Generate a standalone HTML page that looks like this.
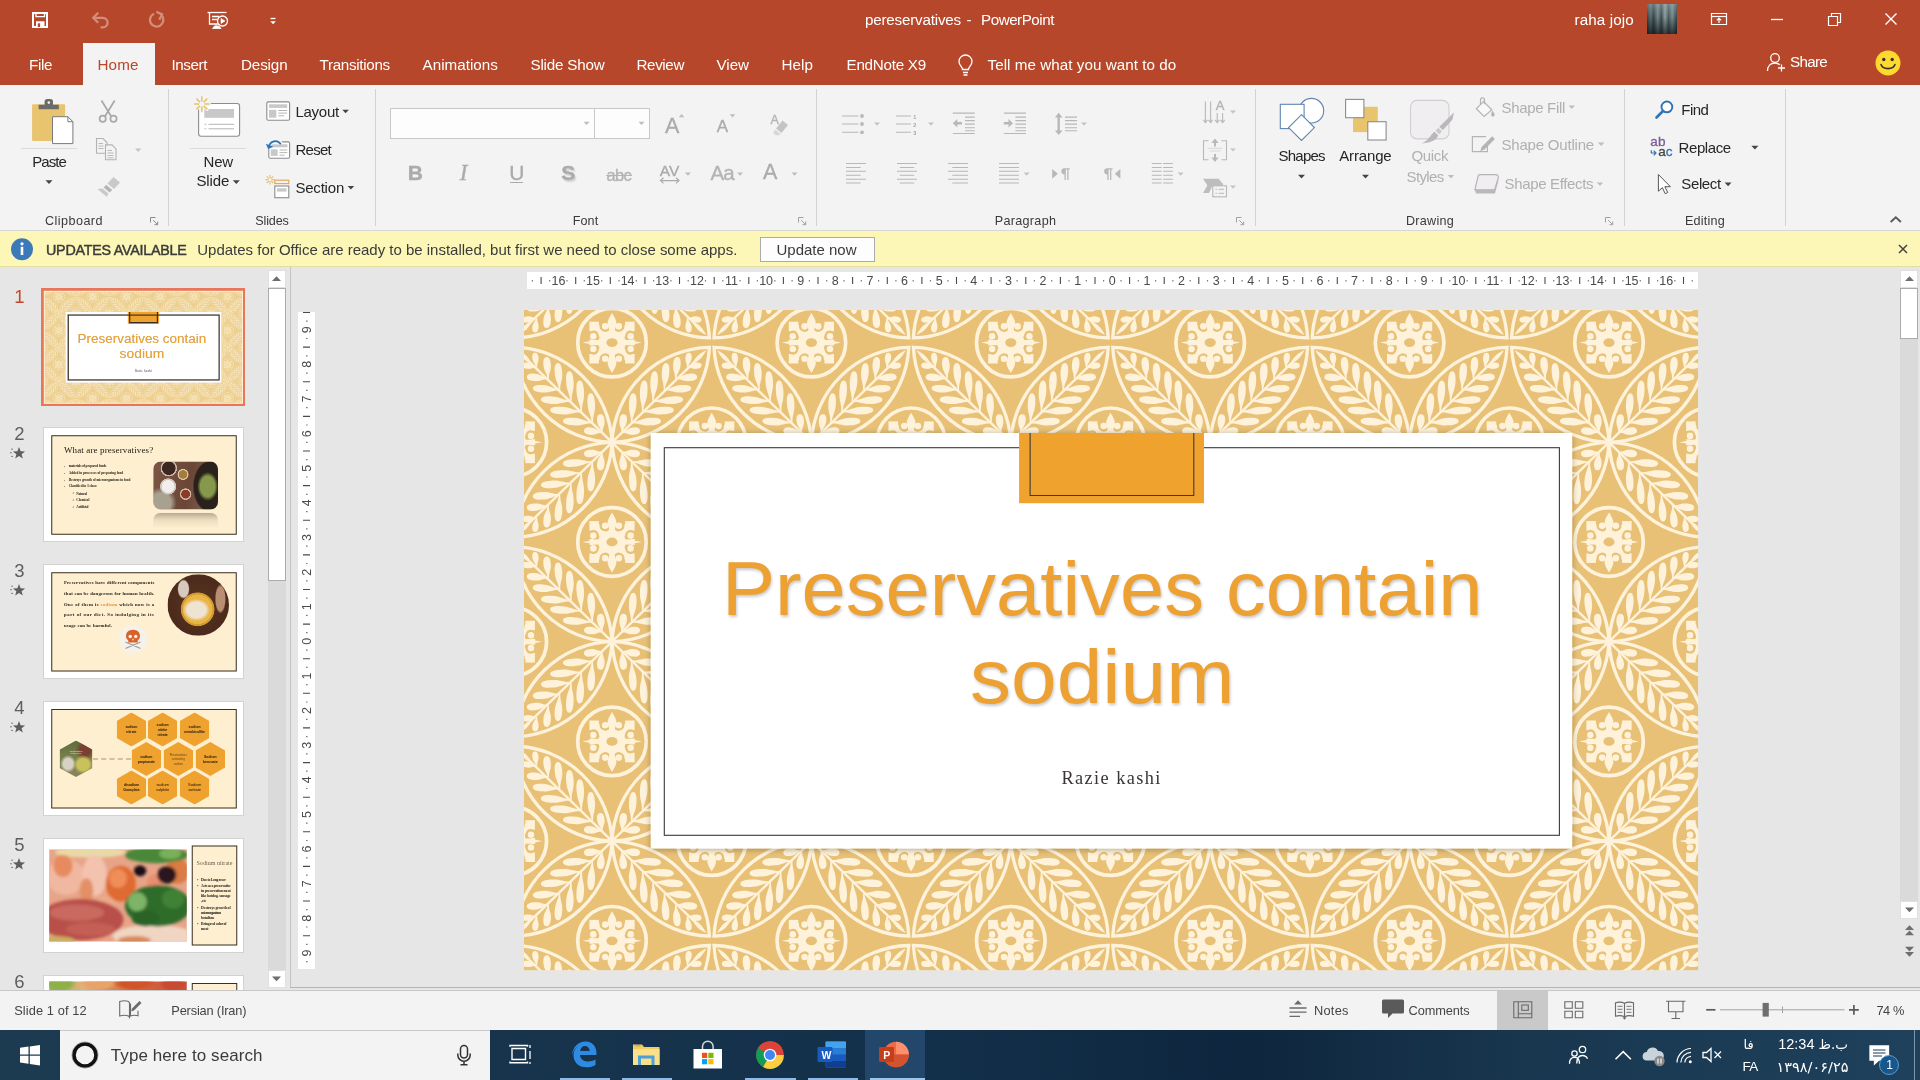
<!DOCTYPE html>
<html lang="en">
<head>
<meta charset="utf-8">
<title>pereservatives - PowerPoint</title>
<style>
*{box-sizing:border-box;margin:0;padding:0}
html,body{width:1920px;height:1080px;overflow:hidden;background:#E6E6E6}
body{font-family:"Liberation Sans",sans-serif;font-size:15px;color:#262626;position:relative}
.abs{position:absolute}
.t{position:absolute;white-space:nowrap;line-height:1}
svg{position:absolute;overflow:visible}
#titlebar{position:absolute;left:0;top:0;width:1920px;height:85px;background:#B7472A}
#ribbon{position:absolute;left:0;top:85px;width:1920px;height:146px;background:#F3F3F3;border-bottom:1px solid #D8D8D2}
#upd{position:absolute;left:0;top:231px;width:1920px;height:36px;background:#FCF7B6;border-bottom:1px solid #E4DFA0}
#work{position:absolute;left:0;top:267px;width:1920px;height:723px;background:#E6E6E6;overflow:hidden}
#status{position:absolute;left:0;top:990px;width:1920px;height:40px;background:#F3F3F3;border-top:1px solid #C8C8C8}
#taskbar{position:absolute;left:0;top:1030px;width:1920px;height:50px;background:linear-gradient(90deg,#1C3B51 0,#18344D 26%,#13304A 48%,#0E263E 65%,#19374F 80%,#1F415C 100%)}
.tab{position:absolute;top:56px;color:#fff;font-size:15.5px;line-height:18px;white-space:nowrap}
.gl{position:absolute;top:214px;font-size:13px;line-height:14px;color:#3A3A3A;white-space:nowrap;transform:translateX(-50%)}
.sep{position:absolute;top:89px;width:1px;height:137px;background:#D2D2D2}
.rl{position:absolute;font-size:15px;line-height:18px;color:#262626;white-space:nowrap}
.rd{color:#B4B4B4;-webkit-text-stroke:.35px currentColor}
</style>
</head>
<body>
<div id="root" style="position:absolute;left:0;top:0;width:1920px;height:1080px;will-change:transform">
<div id="titlebar"></div>
<div id="ribbon"></div>
<div id="upd"></div>
<div id="work"></div>
<div id="status"></div>
<div id="taskbar"></div>
<!-- title bar + tabs -->
<div id="tb2" class="abs" style="left:0;top:0;width:1920px;height:85px">
<svg style="left:0;top:0" width="300" height="42" fill="none" stroke="#fff" stroke-width="1.4">
 <!-- save -->
 <path d="M33,13h14v14h-14z" stroke-width="2"/><path d="M36,21.300h8.500v5.700h-8.500z" fill="#fff" stroke="none"/><path d="M37.800,23.300h2.300v3.700h-2.300z" fill="#B7472A" stroke="none"/><path d="M36,13.500v3.200h8.500v-3.200" stroke-width="1.300"/>
 <!-- undo (dim) -->
 <g stroke="#D28E7C" stroke-width="2.300"><path d="M94,17.800h8.800a4.800,4.800 0 0 1 0,9.600h-2.300"/><path d="M98.200,12.800l-5,5l5,5"/></g>
 <!-- redo (dim) -->
 <g stroke="#D28E7C" stroke-width="2.300"><path d="M161.300,15a6.700,6.700 0 1 1 -7.300,-1.300"/><path d="M156.300,11.700l5.700,2.700l-2.700,5.400"/></g>
 <!-- start from beginning -->
 <g stroke-width="1.3"><path d="M207.5,12.5h19"/><path d="M209.5,12.5v11.5h9"/><path d="M212,16.5h7M212,19.5h5"/><circle cx="222.5" cy="21" r="5" fill="#B7472A"/><path d="M221,18.5l4,2.5l-4,2.5z" fill="#fff" stroke-width="0.6"/><path d="M216,24v3M212.5,28.5h8.5l-2,-2.5h-4.5z" fill="#fff" stroke-width="0.8"/></g>
 <!-- customize -->
 <path d="M270.5,18.5h5" stroke-width="1.3"/><path d="M270.3,21.3h5.6l-2.8,3z" fill="#fff" stroke="none"/>
</svg>
<div class="t" style="font-size:15.2px;letter-spacing:-0.20px;left:865px;top:10.5px;color:#fff;line-height:18px">pereservatives</div><div class="t" style="font-size:15.2px;letter-spacing:-0.56px;left:966.5px;top:10.5px;color:#fff;line-height:18px">-</div><div class="t" style="font-size:15.2px;letter-spacing:-0.47px;left:981px;top:10.5px;color:#fff;line-height:18px">PowerPoint</div>
<div class="t" style="font-size:15.2px;letter-spacing:0.13px;left:1574.5px;top:10.5px;color:#fff;line-height:18px">raha jojo</div>
<!-- avatar -->
<div class="abs" style="left:1647px;top:4px;width:30px;height:30px;background:linear-gradient(180deg,rgba(160,180,182,.55) 0,rgba(120,140,142,.25) 45%,rgba(20,26,28,.75) 100%),linear-gradient(90deg,#1F2729 0,#4F6063 12%,#222B2D 22%,#6F8588 36%,#2B3537 48%,#8FA3A5 60%,#3A4648 72%,#76898B 84%,#222A2C 100%)"></div>
<svg style="left:1700px;top:0" width="220" height="40" fill="none" stroke="#fff" stroke-width="1.2">
 <path d="M11.5,13.5h15v11h-15z"/><path d="M11.5,16.5h15"/><path d="M19,23v-4.5M16.8,20.3l2.2,-2.2l2.2,2.2"/>
 <path d="M71,19.5h12" stroke-width="1.3"/>
 <path d="M128.5,16.5h9v9h-9z"/><path d="M131.5,16.5v-3h9v9h-3"/>
 <path d="M185.5,13.5l11,11M196.5,13.5l-11,11" stroke-width="1.4"/>
</svg>
<!-- tabs -->
<div class="abs" style="left:83px;top:43px;width:72px;height:42px;background:#F3F3F3"></div>
<div class="tab" style="font-size:15.2px;letter-spacing:-0.37px;left:29px">File</div>
<div class="tab" style="font-size:15.2px;letter-spacing:0.11px;left:97.5px;color:#B7472A">Home</div>
<div class="tab" style="font-size:15.2px;letter-spacing:-0.42px;left:171.5px">Insert</div>
<div class="tab" style="font-size:15.2px;letter-spacing:-0.14px;left:241px">Design</div>
<div class="tab" style="font-size:15.2px;letter-spacing:-0.30px;left:319.5px">Transitions</div>
<div class="tab" style="font-size:15.2px;letter-spacing:0.03px;left:422.5px">Animations</div>
<div class="tab" style="font-size:15.2px;letter-spacing:-0.20px;left:530.5px">Slide Show</div>
<div class="tab" style="font-size:15.2px;letter-spacing:-0.39px;left:636.5px">Review</div>
<div class="tab" style="font-size:15.2px;letter-spacing:-0.04px;left:716.5px">View</div>
<div class="tab" style="font-size:15.2px;letter-spacing:0.06px;left:781.5px">Help</div>
<div class="tab" style="font-size:15.2px;letter-spacing:-0.25px;left:846.5px">EndNote X9</div>
<div class="tab" style="font-size:15.2px;letter-spacing:0.05px;left:987.5px">Tell me what you want to do</div>
<svg style="left:955px;top:52px" width="22" height="26" fill="none" stroke="#fff" stroke-width="1.3"><path d="M7.5,17.5c0,-3 -3.5,-4 -3.5,-8a6.5,6.5 0 0 1 13,0c0,4 -3.500,5 -3.5,8z"/><path d="M8,20.5h5M8.5,23h4"/></svg>
<svg style="left:1764px;top:50px" width="26" height="24" fill="none" stroke="#fff" stroke-width="1.3"><circle cx="11" cy="8" r="4.3"/><path d="M3.500,21c0,-5 3,-8 7.500,-8c2,0 3.500,.6 4.700,1.700"/><path d="M17.500,14.500v7M14,18h7"/></svg>
<div class="tab" style="font-size:15.2px;letter-spacing:-0.71px;left:1790px;top:53px">Share</div>
<svg style="left:1874px;top:49px" width="28" height="28"><circle cx="14" cy="14" r="12.500" fill="#FFD92E"/><circle cx="9.800" cy="10.500" r="1.700" fill="#333"/><circle cx="18.200" cy="10.500" r="1.700" fill="#333"/><path d="M7,15.500c2,5.500 12,5.500 14,0" fill="none" stroke="#333" stroke-width="1.600" stroke-linecap="round"/></svg>
</div>
<!-- ribbon: separators + group labels -->
<div class="sep" style="left:168px"></div><div class="sep" style="left:375px"></div><div class="sep" style="left:816px"></div><div class="sep" style="left:1255px"></div><div class="sep" style="left:1624px"></div><div class="sep" style="left:1785px"></div>
<div class="gl" style="font-size:12.6px;letter-spacing:0.45px;left:74px">Clipboard</div>
<div class="gl" style="font-size:12.6px;letter-spacing:-0.14px;left:272px">Slides</div>
<div class="gl" style="font-size:12.6px;letter-spacing:0.07px;left:585.500px">Font</div>
<div class="gl" style="font-size:12.6px;letter-spacing:0.30px;left:1025.500px">Paragraph</div>
<div class="gl" style="font-size:12.6px;letter-spacing:0.25px;left:1430px">Drawing</div>
<div class="gl" style="font-size:12.6px;letter-spacing:0.21px;left:1705px">Editing</div>
<!-- clipboard + slides text -->
<div class="rl" style="font-size:15px;letter-spacing:-0.97px;left:32.300px;top:152.600px">Paste</div>
<div class="rl" style="font-size:15px;letter-spacing:-0.17px;left:203.500px;top:152.600px">New</div>
<div class="rl" style="font-size:15px;letter-spacing:-0.13px;left:196.400px;top:172.400px">Slide</div>
<div class="rl" style="font-size:15px;letter-spacing:-0.24px;left:295.400px;top:102.500px">Layout</div>
<div class="rl" style="font-size:15px;letter-spacing:-0.72px;left:295.400px;top:140.700px">Reset</div>
<div class="rl" style="font-size:15px;letter-spacing:-0.20px;left:295.400px;top:178.700px">Section</div>
<div class="abs" style="left:21px;top:148px;width:56px;height:1px;background:#DADADA"></div>
<div class="abs" style="left:190px;top:148px;width:56px;height:1px;background:#DADADA"></div>
<svg style="left:0;top:85px" width="380" height="146" viewBox="0 85 380 146">
<!-- paste -->
<rect x="32.100" y="104.200" width="33" height="36.800" rx="1" fill="#E9C46E"/>
<path d="M44.600,104.800v-3.400a2.500,2.500 0 0 1 2.500,-2.500h3.400a2.500,2.500 0 0 1 2.500,2.500v3.400h5.800v4.400h-20.200v-4.400z" fill="#6B6B6B"/>
<circle cx="48.800" cy="102.600" r="1.300" fill="#F3F3F3"/>
<path d="M52.500,116.700h15.400l5,5v21.900h-20.400z" fill="#fff" stroke="#7A7A7A" stroke-width="1"/>
<path d="M67.900,116.700v5h5" fill="none" stroke="#7A7A7A" stroke-width="1"/>
<path d="M45.500,180.200h7l-3.500,3.700z" fill="#444"/>
<!-- cut -->
<g fill="none" stroke="#A8A8A8" stroke-width="1.700"><path d="M101.500,100.500l9.500,15.500M114.700,100.500l-9.500,15.500"/><circle cx="102.700" cy="118.800" r="3.100"/><circle cx="113.500" cy="118.800" r="3.100"/></g>
<!-- copy -->
<g fill="#F3F3F3" stroke="#B2B2B2" stroke-width="1.100"><path d="M96.500,138.500h6.500l4,4v10.800h-10.500z"/><path d="M105.500,144.900h6.500l4,4v10.800h-10.500z"/></g>
<g stroke="#B2B2B2" stroke-width="0.900"><path d="M98.500,143.500h4.500M98.500,146h5M98.500,148.500h5M107.500,150.500h4.500M107.500,153h6M107.500,155.500h6M107.500,157.800h6"/></g>
<path d="M135,148.600h6.400l-3.200,3.400z" fill="#C4C4C4"/>
<!-- format painter -->
<g fill="#C9C9C9"><path d="M113.500,177l6.500,5.500l-6,6.500l-6.500,-5.500z"/><path d="M106.200,184.800l6,5.200l-2.500,2.600l-6,-5.200z" fill="#B5B5B5"/><path d="M102.500,188.600l5.800,5l-1.300,3.300l-9.700,-7.900z"/></g>
<path d="M150.500,217.500h5M150.500,217.500v5" fill="none" stroke="#8A8A8A" stroke-width="1"/><path d="M153.200,220.200l4.500,4.500M157.700,221.500v3.200h-3.200" fill="none" stroke="#8A8A8A" stroke-width="1"/>
<!-- new slide -->
<rect x="198.600" y="103.500" width="41" height="32.700" rx="2.500" fill="#fff" stroke="#8C8C8C" stroke-width="1.100"/>
<rect x="204.300" y="109" width="29.700" height="8.800" fill="#C8C8C8"/>
<path d="M208.500,124.300h25.500M208.500,128.800h25.500" stroke="#B5B5B5" stroke-width="1"/><path d="M204.500,124.300h1.800M204.500,128.800h1.800" stroke="#B5B5B5" stroke-width="1"/>
<g stroke="#F3F3F3" stroke-width="3.400" stroke-linecap="round"><path d="M201.800,96.500v15M194.300,104h15M196.500,98.700l10.600,10.600M207.100,98.700l-10.600,10.600"/></g>
<g stroke="#E9C46E" stroke-width="1.500"><path d="M201.800,96.300v15.400M194.100,104h15.400M196.400,98.600l10.800,10.800M207.200,98.600l-10.800,10.800"/></g>
<circle cx="201.800" cy="104" r="2.600" fill="#F3F3F3"/>
<path d="M232.800,180.200h7l-3.500,3.700z" fill="#444"/>
<!-- layout -->
<rect x="266.800" y="101.900" width="22.800" height="18.300" rx="1.500" fill="#fff" stroke="#8C8C8C" stroke-width="1.100"/>
<rect x="269" y="104.300" width="18.200" height="3.600" fill="#C8C8C8"/><rect x="269" y="109.800" width="7.300" height="7.900" fill="#C8C8C8"/>
<path d="M278.300,110.500h8.800M278.300,113.100h8.800M278.300,115.800h6" stroke="#B5B5B5" stroke-width="1"/>
<path d="M342.300,109.800h6.600l-3.300,3.500z" fill="#444"/>
<!-- reset -->
<rect x="268.800" y="141.900" width="20.800" height="16.300" rx="1.500" fill="#fff" stroke="#8C8C8C" stroke-width="1.100"/>
<rect x="270.800" y="144.300" width="16.600" height="3" fill="#C8C8C8"/><rect x="270.800" y="149.300" width="6.800" height="6.600" fill="#C8C8C8"/>
<path d="M279.500,150h7.800M279.500,152.600h7.800M279.500,155.200h5" stroke="#B5B5B5" stroke-width="1"/>
<path d="M268.500,146.500c1.500,-6.500 9,-8 12.300,-2.800" fill="none" stroke="#F3F3F3" stroke-width="4.500"/>
<path d="M268.800,147.300c1,-6.500 8.500,-8.300 12,-3" fill="none" stroke="#2E75B6" stroke-width="1.800"/><path d="M265.800,143.800l2.400,5.300l5.200,-2.300z" fill="#2E75B6"/>
<!-- section -->
<g stroke="#E9C46E" stroke-width="1.200"><path d="M270,175v9.500M265.300,179.700h9.500M266.700,176.400l6.600,6.600M273.300,176.400l-6.600,6.600"/></g>
<circle cx="270" cy="179.700" r="1.600" fill="#F3F3F3"/>
<rect x="274.800" y="180.200" width="14" height="3.400" fill="#F3F3F3" stroke="#E8A153" stroke-width="1.100"/>
<rect x="274.800" y="186" width="14" height="11.700" fill="#fff" stroke="#8C8C8C" stroke-width="1.100"/><rect x="277" y="188.300" width="9.600" height="3.300" fill="#C8C8C8"/>
<path d="M347.600,185.900h6.600l-3.300,3.500z" fill="#444"/>
</svg>
<!-- ribbon: font group -->
<div class="abs" style="left:390px;top:108px;width:205px;height:31px;background:#FDFDFD;border:1px solid #C8C8C8"></div>
<div class="abs" style="left:594px;top:108px;width:56px;height:31px;background:#FDFDFD;border:1px solid #C8C8C8"></div>
<div class="rl rd" style="font-size:21.5px;letter-spacing:1.66px;left:665px;top:114.500px;line-height:22px;color:#ABABAB">A</div>
<div class="rl rd" style="font-size:17px;letter-spacing:0.86px;left:716.700px;top:118.200px;line-height:18px;color:#ABABAB">A</div>
<div class="rl rd" style="font-size:12.5px;letter-spacing:0.16px;left:770.500px;top:112.700px;line-height:14px;color:#B4B4B4">A</div>
<div class="rl rd" style="font-size:21px;letter-spacing:-1.77px;left:407.800px;top:161.300px;line-height:24px;font-weight:bold;color:#ABABAB">B</div>
<div class="rl rd" style="font-size:23px;letter-spacing:2.84px;left:459.800px;top:159.700px;line-height:26px;font-family:'Liberation Serif',serif;font-style:italic;color:#ABABAB">I</div>
<div class="rl rd" style="font-size:21px;letter-spacing:-1.37px;left:509.300px;top:161.300px;line-height:24px;color:#ABABAB">U</div>
<div class="abs" style="left:509.500px;top:181.800px;width:13.500px;height:1.300px;background:#ABABAB"></div>
<div class="rl rd" style="font-size:21px;letter-spacing:-1.11px;left:561.300px;top:161.300px;line-height:24px;font-weight:bold;color:#ABABAB;text-shadow:1.500px 1.500px 1.500px #CFCFCF">S</div>
<div class="rl rd" style="font-size:16.5px;letter-spacing:-0.63px;left:606.500px;top:165.700px;line-height:18px;color:#B4B4B4">abc</div>
<div class="abs" style="left:606px;top:175px;width:25.500px;height:1.200px;background:#B4B4B4"></div>
<div class="rl rd" style="font-size:15.5px;letter-spacing:0.24px;left:659.700px;top:161.800px;line-height:18px;color:#ABABAB">AV</div>
<div class="rl rd" style="font-size:20.5px;letter-spacing:-1.04px;left:710.600px;top:162.400px;line-height:22px;color:#B4B4B4">Aa</div>
<div class="rl rd" style="font-size:21.5px;letter-spacing:0.86px;left:762.900px;top:161.400px;line-height:23px;color:#ABABAB">A</div>
<svg style="left:375px;top:85px" width="450" height="146" viewBox="375 85 450 146">
<g fill="#BDBDBD"><path d="M583.600,121.800h6l-3,3.200z"/><path d="M638.500,121.800h6l-3,3.200z"/><path d="M678.800,117.200h5.600l-2.800,-3.200z"/><path d="M729.700,114.200h5.600l-2.800,3.200z"/>
<path d="M684.900,172.600h6l-3,3.200z"/><path d="M737.100,172.600h6l-3,3.200z"/><path d="M791.500,172.600h6l-3,3.200z"/></g>
<!-- eraser -->
<path d="M782.500,120.500l5.500,4.500l-6.500,8l-5.500,-4.500z" fill="#C4C4C4"/><path d="M775.200,129.600l5.300,4.300l-1.600,1.300h-3l-2.700,-2.300z" fill="#D6D6D6"/>
<!-- AV arrow -->
<path d="M660.500,180.600h18.500M663.500,177.800l-3,2.800l3,2.800M676,177.800l3,2.800l-3,2.800" fill="none" stroke="#ABABAB" stroke-width="1.200"/>
<path d="M798.500,217.500h5M798.500,217.500v5" fill="none" stroke="#A0A0A0" stroke-width="1"/><path d="M801.200,220.200l4.500,4.500M805.700,221.500v3.200h-3.200" fill="none" stroke="#A0A0A0" stroke-width="1"/>
</svg>
<!-- ribbon: paragraph group -->
<svg style="left:815px;top:85px" width="450" height="146" viewBox="815 85 450 146">
<g fill="none" stroke="#B8B8B8" stroke-width="1.100">
<!-- bullets -->
<path d="M842,116h16.400M842,124h16.400M842,132.300h16.400"/>
<!-- numbering -->
<path d="M895.900,116h15.100M895.900,124h15.100M895.900,132.300h15.100"/>
<!-- decrease indent -->
<path d="M952.800,113.100h22M952.800,133.500h22M965,117.100h9.800M965,120.600h9.800M965,124.100h9.800M965,127.700h9.800M965,130.700h9.800"/>
<!-- increase indent -->
<path d="M1003.900,113.100h22M1003.900,133.500h22M1015.400,117.100h10.600M1015.400,120.600h10.600M1015.400,124.100h10.600M1015.400,127.700h10.600M1015.400,130.700h10.600"/>
<!-- line spacing -->
<path d="M1065,117.100h12M1065,120.600h12M1065,124.100h12M1065,127.700h12M1065,130.700h12"/>
<!-- align left -->
<path d="M846,163.500h20M846,167.500h14.700M846,171.200h20M846,175.200h14.700M846,179.200h20M846,183h14.700"/>
<!-- center -->
<path d="M897,163.500h20M899.800,167.500h14.400M897,171.200h20M899.800,175.200h14.400M897,179.200h20M899.800,183h14.400"/>
<!-- right -->
<path d="M948,163.500h20M952.300,167.500h15.700M948,171.200h20M952.300,175.200h15.700M948,179.200h20M952.300,183h15.700"/>
<!-- justify -->
<path d="M999,163.500h20M999,167.500h20M999,171.200h20M999,175.200h20M999,179.200h20M999,183h20"/>
<!-- columns -->
<path d="M1151.800,163.500h9.800M1151.800,167.500h9.800M1151.800,171.200h9.800M1151.800,175.200h9.800M1151.800,179.200h9.800M1151.800,183h9.800M1163.100,163.500h9.800M1163.100,167.500h9.800M1163.100,171.200h9.800M1163.100,175.200h9.800M1163.100,179.200h9.800M1163.100,183h9.800"/>
</g>
<g fill="#B8B8B8">
<circle cx="862" cy="116" r="1.900"/><circle cx="862" cy="124" r="1.900"/><circle cx="862" cy="132.300" r="1.900"/>
<path d="M952.800,123.200l4.500,-4.300v3h4.700v2.600h-4.700v3z"/>
<path d="M1013,123.200l-4.500,-4.300v3h-4.700v2.600h4.700v3z"/>
<path d="M1058.700,112.800l3.800,4.600h-2.600v13h2.600l-3.800,4.600l-3.800,-4.600h2.600v-13h-2.600z"/>
<!-- LTR / RTL -->
<path d="M1052.200,168.900l5.600,4.900l-5.600,4.900z"/><path d="M1120.400,168.900l-5.600,4.900l5.600,4.900z"/>
<path d="M1064.500,168.200h5.300v1.300h-1.300v10.500h-1.300v-10.500h-1.400v10.500h-1.300v-5.500a3.150,3.150 0 0 1 0,-6.300z"/>
<path d="M1107.300,168.200h5.300v1.300h-1.300v10.500h-1.300v-10.500h-1.400v10.500h-1.300v-5.500a3.150,3.150 0 0 1 0,-6.300z"/>
</g>
<g fill="#C4C4C4"><path d="M874,122.600h6l-3,3.200z"/><path d="M928,122.600h6l-3,3.200z"/><path d="M1081,122.600h6l-3,3.200z"/><path d="M1023.600,172.600h6l-3,3.200z"/><path d="M1177.600,172.600h6l-3,3.200z"/>
<path d="M1230,110.500h6l-3,3.200z"/><path d="M1230,148.400h6l-3,3.200z"/><path d="M1230,185.600h6l-3,3.200z"/></g>
<!-- text direction -->
<g fill="none" stroke="#B8B8B8" stroke-width="1.100"><path d="M1205.400,101.500v21M1210.600,101.500v21M1217.200,113v9.500M1222.600,113v9.500"/><path d="M1203.300,119.800l2.100,2.700l2.100,-2.700M1208.500,119.800l2.100,2.700l2.100,-2.700M1215.100,119.800l2.100,2.700l2.100,-2.700M1220.500,119.800l2.100,2.700l2.100,-2.700"/></g>
<!-- align text -->
<g fill="none" stroke="#B8B8B8" stroke-width="1.100"><path d="M1208.500,140.700h-5v19h5M1221.500,140.700h5v19h-5"/><path d="M1207.500,148.300h15M1209.500,151h11" stroke-width="0.800" stroke="#CFCFCF"/></g>
<path d="M1215,138.500l3.600,4.400h-2.600v3.600h-2v-3.600h-2.600zM1215,162l3.600,-4.400h-2.600v-3.600h-2v3.600h-2.600z" fill="#B8B8B8"/>
<!-- smartart -->
<path d="M1203,178.700h15.500l4.800,5.600l-2,2.400h-9.300l-3,6.300h-6l4.400,-7.400z" fill="#BDBDBD"/>
<rect x="1212.800" y="185.800" width="13.700" height="11" fill="#F3F3F3" stroke="#B8B8B8" stroke-width="1.100"/><path d="M1215.500,189.300h1.500M1218.500,189.300h5.500M1215.500,193.300h1.500M1218.500,193.300h5.500" stroke="#B8B8B8" stroke-width="1"/>
<path d="M1236.500,217.500h5M1236.500,217.500v5" fill="none" stroke="#A0A0A0" stroke-width="1"/><path d="M1239.200,220.200l4.500,4.500M1243.700,221.500v3.200h-3.200" fill="none" stroke="#A0A0A0" stroke-width="1"/>
</svg>
<div class="t" style="left:913.200px;top:113.600px;font-size:5.500px;line-height:6px;color:#A6A6A6;font-weight:bold">1</div>
<div class="t" style="left:913.200px;top:121.600px;font-size:5.500px;line-height:6px;color:#A6A6A6;font-weight:bold">2</div>
<div class="t" style="left:913.200px;top:129.800px;font-size:5.500px;line-height:6px;color:#A6A6A6;font-weight:bold">3</div>
<div class="rl rd" style="font-size:13px;letter-spacing:1.33px;left:1215.800px;top:98.800px;line-height:14px;color:#B4B4B4">A</div>
<!-- ribbon: drawing + editing -->
<div class="rl" style="font-size:15px;letter-spacing:-0.73px;left:1278.400px;top:147.400px">Shapes</div>
<div class="rl" style="font-size:15px;letter-spacing:-0.14px;left:1339.200px;top:147.400px">Arrange</div>
<div class="rl" style="font-size:15px;letter-spacing:-0.33px;left:1411.400px;top:147.400px;color:#B0B0B0">Quick</div>
<div class="rl" style="font-size:15px;letter-spacing:-0.61px;left:1406.500px;top:167.800px;color:#B0B0B0">Styles</div>
<div class="rl" style="font-size:15px;letter-spacing:-0.33px;left:1501.500px;top:98.500px;color:#B0B0B0">Shape Fill</div>
<div class="rl" style="font-size:15px;letter-spacing:-0.20px;left:1501.500px;top:135.600px;color:#B0B0B0">Shape Outline</div>
<div class="rl" style="font-size:15px;letter-spacing:-0.34px;left:1504.500px;top:175.400px;color:#B0B0B0">Shape Effects</div>
<div class="rl" style="font-size:15px;letter-spacing:-0.55px;left:1681.300px;top:101.300px">Find</div>
<div class="rl" style="font-size:15px;letter-spacing:-0.43px;left:1678.600px;top:138.500px">Replace</div>
<div class="rl" style="font-size:15px;letter-spacing:-0.37px;left:1681.300px;top:175.200px">Select</div>
<div class="t" style="font-size:13.5px;letter-spacing:0.24px;left:1650.300px;top:134.800px;line-height:14px;color:#7A5C99;-webkit-text-stroke:.3px #7A5C99">ab</div>
<div class="t" style="font-size:13.5px;letter-spacing:-0.03px;left:1658.300px;top:144.800px;line-height:14px;color:#444;-webkit-text-stroke:.3px currentColor">a<span style="color:#2E75B6">c</span></div>
<svg style="left:1255px;top:85px" width="665" height="146" viewBox="1255 85 665 146">
<!-- shapes -->
<g fill="#fff" stroke="#5F84AE" stroke-width="1.100"><circle cx="1311.400" cy="110.700" r="12.300"/><rect x="1280.300" y="104.300" width="23.800" height="24.300"/><path d="M1301.500,114.700l12.900,12.900l-12.900,12.900l-12.900,-12.900z"/></g>
<!-- arrange -->
<rect x="1353" y="106.800" width="24.800" height="25.300" fill="#E9C46E"/>
<g fill="#fff" stroke="#8C8C8C" stroke-width="1.100"><rect x="1345.600" y="99.400" width="18.300" height="18.300"/><rect x="1367.800" y="121.700" width="18.300" height="18.300"/></g>
<!-- quick styles -->
<rect x="1410.500" y="100.400" width="38.500" height="38.500" rx="6.500" fill="#F1EEF2" stroke="#CFCFCF" stroke-width="1.100"/>
<path d="M1454,112.500l-1.600,7.200l-9.500,10.300l-3.600,-3.300z" fill="#B9B9B9"/><path d="M1438.200,127.800l3.700,3.400l-2.600,3l-3.800,-3.400z" fill="#C9C9C9"/><path d="M1434.300,131.800l3.900,3.500c-1,4.500 -7,7.700 -16.500,8.100c6.500,-2.300 8.800,-8.600 12.600,-11.600z" fill="#B9B9B9"/>
<!-- dropdown arrows -->
<g fill="#444"><path d="M1298,174.800h7l-3.500,3.700z"/><path d="M1362,174.800h7l-3.500,3.700z"/><path d="M1751.400,145.800h7l-3.500,3.700z"/><path d="M1724.700,182.600h6.800l-3.400,3.600z"/></g>
<g fill="#BDBDBD"><path d="M1447.800,175h6.400l-3.200,3.400z"/><path d="M1568.600,105.600h6.400l-3.200,3.400z"/><path d="M1598,142.500h6.400l-3.200,3.400z"/><path d="M1596.800,182.400h6.400l-3.200,3.400z"/></g>
<!-- shape fill bucket -->
<g fill="none" stroke="#B4B4B4" stroke-width="1.200"><path d="M1483.500,101.500l8.300,8.300l-7.700,6.700l-7.800,-7.700z" fill="#F8F8F8"/><path d="M1480.500,104v-4.200a2,2 0 0 1 4,0v4.500"/></g><path d="M1492.300,110.500c1.500,2 2.300,3.300 2.300,4.400a1.700,1.700 0 0 1 -3.400,0c0,-1.100 .4,-2.400 1.100,-4.400z" fill="#B4B4B4"/>
<!-- shape outline -->
<path d="M1486,136.700h-13.600v15h15v-6" fill="none" stroke="#B4B4B4" stroke-width="1.200"/><path d="M1492.200,136.300l2.700,2.600l-10.600,10.800l-4,1.300l1.300,-4z" fill="#B4B4B4"/>
<!-- shape effects -->
<path d="M1479.600,174.600h16.200a2.600,2.600 0 0 1 2.500,3.300l-3.700,11.900h-19.700l3,-13a2.600,2.600 0 0 1 1.700,-2.200z" fill="#F1EEF2" stroke="#B4B4B4" stroke-width="1.200"/><path d="M1474.900,189.800h19.700l3.700,-11.900v3.200l-3.300,12.400h-19z" fill="#B9B9B9"/>
<!-- find -->
<circle cx="1666.900" cy="106.900" r="5.400" fill="#fff" stroke="#2E75B6" stroke-width="1.900"/><path d="M1663,111l-6.500,6.500" stroke="#2E75B6" stroke-width="2.700" stroke-linecap="round"/>
<path d="M1651.300,150.300v2.700h4.200M1653.700,150.700l2.300,2.300l-2.300,2.300" fill="none" stroke="#2E75B6" stroke-width="1.200"/>
<!-- select cursor -->
<path d="M1658.400,174.500v16.700l4,-3.500l2.800,6l2.500,-1.200l-2.800,-5.800h5.500z" fill="#fff" stroke="#555" stroke-width="1"/>
<path d="M1890.700,222l5.100,-4.800l5.100,4.800" fill="none" stroke="#5A5A5A" stroke-width="1.900"/>
<path d="M1605.500,217.500h5M1605.500,217.500v5" fill="none" stroke="#A0A0A0" stroke-width="1"/><path d="M1608.200,220.200l4.500,4.500M1612.700,221.500v3.200h-3.200" fill="none" stroke="#A0A0A0" stroke-width="1"/>
</svg>
<!-- update bar -->
<svg style="left:10px;top:237px" width="24" height="24"><circle cx="12" cy="12.300" r="11" fill="#3B79B9"/><circle cx="12" cy="6.800" r="1.600" fill="#fff"/><rect x="10.700" y="9.800" width="2.600" height="8.200" fill="#fff"/></svg>
<div class="t" style="font-size:14.3px;letter-spacing:-0.24px;left:46px;top:240.500px;line-height:18px;color:#3B3B3B;-webkit-text-stroke:.45px #3B3B3B">UPDATES AVAILABLE</div>
<div class="t" style="font-size:15px;letter-spacing:-0.01px;left:197.300px;top:240.500px;line-height:18px;color:#3B3B3B">Updates for Office are ready to be installed, but first we need to close some apps.</div>
<div class="abs" style="left:760px;top:236.500px;width:114.500px;height:25px;background:#FDFDFD;border:1px solid #ABABAB"></div>
<div class="t" style="font-size:15px;letter-spacing:-0.01px;left:776.500px;top:240.500px;line-height:18px;color:#3B3B3B">Update now</div>
<svg style="left:1896px;top:242px" width="14" height="14"><path d="M3,3l8,8M11,3l-8,8" stroke="#444" stroke-width="1.500" fill="none"/></svg>
<!-- workspace frame lines -->
<div class="abs" style="left:290px;top:987px;width:1630px;height:1px;background:#B4B4B4"></div>
<div class="abs" style="left:290px;top:267px;width:1px;height:720px;background:#C4C4C4"></div>
<!-- rulers -->
<div class="abs" style="left:527px;top:272px;width:1171px;height:17px;background:#fff"></div><div class="abs" style="left:298px;top:312px;width:17px;height:657px;background:#fff"></div><svg style="left:0;top:267px" width="1920" height="723" viewBox="0 267 1920 723"><path d="M541.1,277v7M575.7,277v7M610.3,277v7M644.9,277v7M679.5,277v7M714.2,277v7M748.8,277v7M783.4,277v7M818.0,277v7M852.6,277v7M887.3,277v7M921.9,277v7M956.5,277v7M991.1,277v7M1025.8,277v7M1060.4,277v7M1095.0,277v7M1129.6,277v7M1164.2,277v7M1198.8,277v7M1233.5,277v7M1268.1,277v7M1302.7,277v7M1337.3,277v7M1371.9,277v7M1406.6,277v7M1441.2,277v7M1475.8,277v7M1510.4,277v7M1545.0,277v7M1579.7,277v7M1614.3,277v7M1648.9,277v7M1683.5,277v7M303,312.5h7M303,347.1h7M303,381.8h7M303,416.4h7M303,451.0h7M303,485.6h7M303,520.2h7M303,554.9h7M303,589.5h7M303,624.1h7M303,658.7h7M303,693.3h7M303,727.9h7M303,762.6h7M303,797.2h7M303,831.8h7M303,866.4h7M303,901.0h7M303,935.7h7" stroke="#4A4A4A" stroke-width="1.100" fill="none"/><path d="M532.4,280v1.6M549.7,280v1.6M567.0,280v1.6M584.3,280v1.6M601.7,280v1.6M619.0,280v1.6M636.3,280v1.6M653.6,280v1.6M670.9,280v1.6M688.2,280v1.6M705.5,280v1.6M722.8,280v1.6M740.1,280v1.6M757.4,280v1.6M774.8,280v1.6M792.1,280v1.6M809.4,280v1.6M826.7,280v1.6M844.0,280v1.6M861.3,280v1.6M878.6,280v1.6M895.9,280v1.6M913.2,280v1.6M930.5,280v1.6M947.9,280v1.6M965.2,280v1.6M982.5,280v1.6M999.8,280v1.6M1017.1,280v1.6M1034.4,280v1.6M1051.7,280v1.6M1069.0,280v1.6M1086.3,280v1.6M1103.6,280v1.6M1121.0,280v1.6M1138.3,280v1.6M1155.6,280v1.6M1172.9,280v1.6M1190.2,280v1.6M1207.5,280v1.6M1224.8,280v1.6M1242.1,280v1.6M1259.4,280v1.6M1276.7,280v1.6M1294.1,280v1.6M1311.4,280v1.6M1328.7,280v1.6M1346.0,280v1.6M1363.3,280v1.6M1380.6,280v1.6M1397.9,280v1.6M1415.2,280v1.6M1432.5,280v1.6M1449.8,280v1.6M1467.2,280v1.6M1484.5,280v1.6M1501.8,280v1.6M1519.1,280v1.6M1536.4,280v1.6M1553.7,280v1.6M1571.0,280v1.6M1588.3,280v1.6M1605.6,280v1.6M1622.9,280v1.6M1640.3,280v1.6M1657.6,280v1.6M1674.9,280v1.6M1692.2,280v1.6M306,321.2h1.600M306,338.5h1.600M306,355.8h1.600M306,373.1h1.600M306,390.4h1.600M306,407.7h1.600M306,425.0h1.600M306,442.3h1.600M306,459.6h1.600M306,477.0h1.600M306,494.3h1.600M306,511.6h1.600M306,528.9h1.600M306,546.2h1.600M306,563.5h1.600M306,580.8h1.600M306,598.1h1.600M306,615.4h1.600M306,632.7h1.600M306,650.1h1.600M306,667.4h1.600M306,684.7h1.600M306,702.0h1.600M306,719.3h1.600M306,736.6h1.600M306,753.9h1.600M306,771.2h1.600M306,788.5h1.600M306,805.8h1.600M306,823.2h1.600M306,840.5h1.600M306,857.8h1.600M306,875.1h1.600M306,892.4h1.600M306,909.7h1.600M306,927.0h1.600M306,944.3h1.600M306,961.6h1.600" stroke="#7A7A7A" stroke-width="1.200" fill="none"/><g font-family="'Liberation Sans',sans-serif" font-size="12.500" fill="#4A4A4A" text-anchor="middle"><text x="558.4" y="285.300">16</text><text x="593.0" y="285.300">15</text><text x="627.6" y="285.300">14</text><text x="662.2" y="285.300">13</text><text x="696.9" y="285.300">12</text><text x="731.5" y="285.300">11</text><text x="766.1" y="285.300">10</text><text x="800.7" y="285.300">9</text><text x="835.3" y="285.300">8</text><text x="870.0" y="285.300">7</text><text x="904.6" y="285.300">6</text><text x="939.2" y="285.300">5</text><text x="973.8" y="285.300">4</text><text x="1008.4" y="285.300">3</text><text x="1043.1" y="285.300">2</text><text x="1077.7" y="285.300">1</text><text x="1112.3" y="285.300">0</text><text x="1146.9" y="285.300">1</text><text x="1181.5" y="285.300">2</text><text x="1216.2" y="285.300">3</text><text x="1250.8" y="285.300">4</text><text x="1285.4" y="285.300">5</text><text x="1320.0" y="285.300">6</text><text x="1354.6" y="285.300">7</text><text x="1389.3" y="285.300">8</text><text x="1423.9" y="285.300">9</text><text x="1458.5" y="285.300">10</text><text x="1493.1" y="285.300">11</text><text x="1527.7" y="285.300">12</text><text x="1562.4" y="285.300">13</text><text x="1597.0" y="285.300">14</text><text x="1631.6" y="285.300">15</text><text x="1666.2" y="285.300">16</text><text transform="translate(311.200,329.8) rotate(-90)">9</text><text transform="translate(311.200,364.4) rotate(-90)">8</text><text transform="translate(311.200,399.1) rotate(-90)">7</text><text transform="translate(311.200,433.7) rotate(-90)">6</text><text transform="translate(311.200,468.3) rotate(-90)">5</text><text transform="translate(311.200,502.9) rotate(-90)">4</text><text transform="translate(311.200,537.5) rotate(-90)">3</text><text transform="translate(311.200,572.2) rotate(-90)">2</text><text transform="translate(311.200,606.8) rotate(-90)">1</text><text transform="translate(311.200,641.4) rotate(-90)">0</text><text transform="translate(311.200,676.0) rotate(-90)">1</text><text transform="translate(311.200,710.6) rotate(-90)">2</text><text transform="translate(311.200,745.3) rotate(-90)">3</text><text transform="translate(311.200,779.9) rotate(-90)">4</text><text transform="translate(311.200,814.5) rotate(-90)">5</text><text transform="translate(311.200,849.1) rotate(-90)">6</text><text transform="translate(311.200,883.7) rotate(-90)">7</text><text transform="translate(311.200,918.4) rotate(-90)">8</text><text transform="translate(311.200,953.0) rotate(-90)">9</text></g></svg>
<!-- pane scrollbar -->
<div class="abs" style="left:267.500px;top:288px;width:18px;height:682px;background:#DADADA"></div>
<div class="abs" style="left:267.500px;top:269.500px;width:18px;height:18px;background:#fff;border:1px solid #E0E0E0"></div>
<div class="abs" style="left:267.500px;top:288px;width:18px;height:292.500px;background:#fff;border:1px solid #ABABAB"></div>
<div class="abs" style="left:267.500px;top:969.500px;width:18px;height:18px;background:#fff;border:1px solid #E0E0E0"></div>
<!-- right scrollbar -->
<div class="abs" style="left:1900.300px;top:288px;width:18.200px;height:613px;background:#DADADA"></div>
<div class="abs" style="left:1900.300px;top:269.500px;width:18.200px;height:18px;background:#fff;border:1px solid #E0E0E0"></div>
<div class="abs" style="left:1900.300px;top:288px;width:18.200px;height:50.500px;background:#fff;border:1px solid #ABABAB"></div>
<div class="abs" style="left:1900.300px;top:900.500px;width:18.200px;height:18px;background:#fff;border:1px solid #E0E0E0"></div>
<svg style="left:0;top:267px" width="1920" height="723" viewBox="0 267 1920 723" fill="#6E6E6E">
<path d="M272,281h9l-4.500,-4.700zM272,976.500h9l-4.500,4.700zM1905,281h9l-4.500,-4.700zM1905,907.500h9l-4.500,4.700z"/>
<path d="M1905,930h9l-4.500,-4.700zM1905,935.200h9l-4.500,-4.700zM1905,946.800h9l-4.500,4.700zM1905,952h9l-4.500,4.700z"/>
</svg>
<!-- left thumbnail pane -->
<style>
.th{position:absolute;left:43.500px;width:199px;height:113px;background:#fff;outline:1px solid #D2D2D2;overflow:hidden}
.th4{position:absolute;left:0;top:0;width:796px;height:452px;transform:scale(.25);transform-origin:0 0;font-family:"Liberation Serif",serif;color:#1E1A14}
.th4 div,.th4 span{position:absolute;white-space:nowrap;line-height:1}
.cr{background:#FDEFCF;border:4px solid #3A2F22}
.num{position:absolute;left:10px;width:19px;text-align:center;font-size:18.500px;line-height:20px;color:#5E5E5E}
.bl{font-weight:bold;font-size:13.500px}
.hx{width:118px;height:136px;background:#F0A22E;clip-path:polygon(50% 0,100% 25%,100% 75%,50% 100%,0 75%,0 25%);font-family:"Liberation Sans",sans-serif;font-weight:bold;font-size:14px;text-align:center}
.hx span{left:0;width:118px;text-align:center;white-space:normal;line-height:19px;top:49px;letter-spacing:-.3px}
</style>
<div id="pane" class="abs" style="left:0;top:267px;width:266px;height:723px;overflow:hidden">
<div class="num" style="top:19.500px;color:#C2492D">1</div>
<div class="num" style="top:157px">2</div><div class="num" style="top:294px">3</div><div class="num" style="top:431px">4</div><div class="num" style="top:568px">5</div><div class="num" style="top:705px">6</div>
<svg style="left:10px;top:0" width="20" height="720" fill="#5E5E5E"><defs><g id="st"><path d="M9,0l1.600,4.200l4.500,.2l-3.500,2.800l1.200,4.300l-3.800,-2.500l-3.800,2.500l1.200,-4.300l-3.500,-2.800l4.500,-.2z"/><path d="M1.300,2.200h1.500M.2,5.800h1.500M1.300,9.400h1.500" stroke="#5E5E5E" stroke-width="1"/></g></defs><use href="#st" x="0" y="180"/><use href="#st" x="0" y="317"/><use href="#st" x="0" y="454"/><use href="#st" x="0" y="591"/></svg>
<!-- thumb 1 -->
<div class="abs" style="left:41px;top:21.300px;width:204px;height:117.700px;background:#E8775A"></div>
<svg style="left:43.600px;top:24px" width="198.800" height="112.500"><use href="#slidebg" width="198.800" height="112.500"/><rect width="198.800" height="112.500" fill="#F1DAA6" opacity=".55"/><use href="#slide1" width="198.800" height="112.500"/><rect x="24.300" y="24.100" width="150.800" height="64.800" fill="none" stroke="#3A3024" stroke-width="1.150"/><path d="M85.700,20.950V31.600H113.400V20.950" fill="none" stroke="#3A3024" stroke-width="1.150"/><rect x=".250" y=".250" width="198.300" height="112" fill="none" stroke="#FFF1DC" stroke-width=".9"/></svg>
<!-- thumb 2 -->
<div class="th" style="top:160.500px"><div class="th4">
<div class="cr" style="left:28.500px;top:29px;width:742.500px;height:397.500px"></div>
<div style="font-size:36px;letter-spacing:0.49px;left:80px;top:71px">What are preservatives?</div>
<div class="bl" style="left:80px;top:146px">-</div><div class="bl" style="left:80px;top:173.500px">-</div><div class="bl" style="left:80px;top:200.500px">-</div><div class="bl" style="left:80px;top:225.500px">-</div>
<div class="bl" style="font-size:13.5px;letter-spacing:-0.33px;left:98.800px;top:146px">materials of prepared foods</div>
<div class="bl" style="font-size:13.5px;letter-spacing:0.09px;left:98.800px;top:173.500px">Added in processes of preparing food</div>
<div class="bl" style="font-size:13.5px;letter-spacing:-0.06px;left:98.800px;top:200.500px">Destroys growth of microorganisms in food</div>
<div class="bl" style="font-size:13.5px;letter-spacing:-0.10px;left:98.800px;top:225.500px">Classified in 3 class:</div>
<div class="bl" style="left:113px;top:254.500px;font-family:'DejaVu Sans',sans-serif;font-size:11px">✓</div><div class="bl" style="left:113px;top:282px;font-family:'DejaVu Sans',sans-serif;font-size:11px">✓</div><div class="bl" style="left:113px;top:309.500px;font-family:'DejaVu Sans',sans-serif;font-size:11px">✓</div>
<div class="bl" style="font-size:13.5px;letter-spacing:-0.37px;left:129.200px;top:254.500px">Natural</div>
<div class="bl" style="font-size:13.5px;letter-spacing:-0.34px;left:129.200px;top:282px">Chemical</div>
<div class="bl" style="font-size:13.5px;letter-spacing:-0.41px;left:129.200px;top:309.500px">Artificial</div>
<div style="left:437px;top:133.500px;width:259px;height:192px;border-radius:30px;background:radial-gradient(circle at 24% 14%,#3B2622 0 10%,#C9B9AE 11% 12.500%,transparent 13%),radial-gradient(circle at 23% 52%,#F1EEEC 0 11%,#CFC6BF 12% 14%,transparent 15%),radial-gradient(circle at 46% 27%,#A57C36 0 8%,#D8C7B4 9% 10.500%,transparent 11.500%),radial-gradient(circle at 50% 68%,#8C3B26 0 9%,#D2B7A6 10% 12%,transparent 13%),radial-gradient(ellipse 16% 30% at 84% 52%,#86994A 0 70%,transparent 100%),radial-gradient(ellipse 27% 55% at 88% 52%,#2B211C 0 92%,transparent 100%),radial-gradient(circle at 12% 86%,#A9A18F 0 14%,transparent 22%),linear-gradient(100deg,#7B5645 0,#6A4636 55%,#8A6B5A 100%)"></div>
<div style="left:437px;top:340px;width:259px;height:62px;border-radius:28px 28px 0 0;background:linear-gradient(180deg,rgba(120,100,85,.5) 0,rgba(160,140,120,.18) 45%,rgba(253,239,207,0) 100%)"></div>
</div></div>
<!-- thumb 3 -->
<div class="th" style="top:297.500px"><div class="th4">
<div class="cr" style="left:28.500px;top:29px;width:742.500px;height:396.500px"></div>
<div class="bl" style="font-size:19px;letter-spacing:0.87px;left:80px;top:61px;font-size:19px">Preservatives have different components</div>
<div class="bl" style="font-size:19px;letter-spacing:0.84px;left:80px;top:103.500px;font-size:19px">that can be dangerous for human health.</div>
<div class="bl" style="font-size:19px;letter-spacing:1.58px;left:80px;top:146px;font-size:19px">One of them is <span style="position:static;color:#E8912A">sodium</span> which now is a</div>
<div class="bl" style="font-size:19px;letter-spacing:2.23px;left:80px;top:188.500px;font-size:19px">part of our diet. So indulging in its</div>
<div class="bl" style="font-size:19px;letter-spacing:0.65px;left:80px;top:231px;font-size:19px">usage can be harmful.</div>
<div style="left:494px;top:37px;width:246px;height:246px;border-radius:50%;background:radial-gradient(ellipse 10% 16% at 26% 24%,#D8C9BE 0 80%,transparent 100%),radial-gradient(ellipse 9% 24% at 86% 40%,#B98F72 0 80%,transparent 100%),radial-gradient(ellipse 22% 18% at 47% 58%,#EFE3D2 0 70%,transparent 100%),radial-gradient(circle at 49% 57%,#E9B545 0 31%,#D39A2E 32% 35%,transparent 36.500%),radial-gradient(circle at 50% 50%,#5A3420 0,#45261A 100%)"></div>
<div style="left:300px;top:241px;width:112px;height:112px;border-radius:50%;background:#F6F1EA"></div>
<svg style="left:300px;top:241px" width="112" height="112"><path d="M28,92l56,-24M84,92l-56,-24" stroke="#9A9A9A" stroke-width="5" stroke-linecap="round"/><path d="M56,18c-18,0 -28,11 -28,25c0,9 4,14 9,17v9h38v-9c5,-3 9,-8 9,-17c0,-14 -10,-25 -28,-25z" fill="#D9622B"/><circle cx="45" cy="45" r="7" fill="#F6F1EA"/><circle cx="67" cy="45" r="7" fill="#F6F1EA"/><path d="M56,52l-4,8h8z" fill="#F6F1EA"/></svg>
</div></div>
<!-- thumb 4 -->
<div class="th" style="top:434.500px"><div class="th4">
<div class="cr" style="left:28.500px;top:28.400px;width:742px;height:398px"></div>
<div class="hx" style="left:290.600px;top:42.400px"><span>sodium<br>nitrate</span></div>
<div class="hx" style="left:415.400px;top:42.400px"><span style="top:40px">sodium<br>nitrite<br>nitrate</span></div>
<div class="hx" style="left:543.400px;top:42.400px"><span>sodium<br>metabisulfite</span></div>
<div class="hx" style="left:350.200px;top:160px"><span>sodium<br>propionate</span></div>
<div class="hx" style="left:478.200px;top:160px;font-weight:normal;color:#6B4A1E"><span style="top:42px;font-size:12px;line-height:18px">Preservatives<br>containing<br>sodium</span></div>
<div class="hx" style="left:606.200px;top:160px"><span>Sodium<br>benzoate</span></div>
<div class="hx" style="left:290.600px;top:273.600px"><span>disodium<br>Guanylate</span></div>
<div class="hx" style="left:415.400px;top:273.600px;font-weight:normal;font-size:12px"><span style="top:46px;line-height:21px;font-size:16px">sodium<br>sulphite</span></div>
<div class="hx" style="left:543.400px;top:273.600px;font-weight:normal;font-size:12px"><span style="top:46px;line-height:21px;font-size:16px">Sodium<br>sorbate</span></div>
<svg style="left:194px;top:224px" width="160" height="8"><path d="M2,4H156" stroke="#8B7A45" stroke-width="3" stroke-dasharray="20 13" fill="none"/></svg>
<div class="hx" style="left:62px;top:154px;width:132px;height:146px;background:radial-gradient(ellipse 30% 26% at 72% 66%,#C9C25A 0 60%,transparent 100%),radial-gradient(ellipse 24% 24% at 26% 64%,#D8D2C4 0 60%,transparent 100%),radial-gradient(ellipse 30% 30% at 78% 26%,#7A3F30 0 50%,transparent 100%),linear-gradient(180deg,#5F6B3A 0,#76804A 45%,#8A8560 100%)"><span style="width:132px;top:36px;color:#E8E4D8;font-size:9px;line-height:10px;font-weight:normal">Preservatives<br>in the Food</span></div>
</div></div>
<!-- thumb 5 -->
<div class="th" style="top:571.500px"><div class="th4">
<svg style="left:21px;top:41.500px" width="550" height="368" viewBox="0 0 100 67" preserveAspectRatio="none"><defs><filter id="pb" x="-10%" y="-10%" width="120%" height="120%"><feGaussianBlur stdDeviation="1.1"/></filter><clipPath id="pc"><rect width="100" height="67"/></clipPath></defs><g clip-path="url(#pc)"><rect x="-5" y="-5" width="110" height="77" fill="#E7A488"/><g filter="url(#pb)">
<ellipse cx="30" cy="2" rx="26" ry="4" fill="#EAD9A8"/><ellipse cx="12" cy="20" rx="14" ry="13" fill="#F1B8A1"/><ellipse cx="10" cy="12" rx="7" ry="8" fill="#E78A5E"/><ellipse cx="33" cy="19" rx="9" ry="15" fill="#F3C3B0"/><ellipse cx="27" cy="30" rx="5" ry="9" fill="#E39066"/>
<ellipse cx="52" cy="25" rx="11" ry="13" fill="#DF6A33"/><ellipse cx="50" cy="21" rx="6.500" ry="7" fill="#EF8E58"/><ellipse cx="40" cy="40" rx="8" ry="6" fill="#EDA98A"/>
<ellipse cx="93" cy="16" rx="9" ry="9" fill="#DB7C45"/><ellipse cx="77" cy="24" rx="6" ry="6" fill="#E88E70"/>
<ellipse cx="23" cy="51" rx="31" ry="15" fill="#B8504A"/><ellipse cx="20" cy="46" rx="20" ry="6" fill="#C9695E"/><ellipse cx="30" cy="58" rx="18" ry="5" fill="#C45E54"/>
<ellipse cx="76" cy="63" rx="30" ry="8" fill="#F0D5C2"/><ellipse cx="62" cy="66" rx="12" ry="3" fill="#D98A5C"/>
<ellipse cx="5" cy="67" rx="14" ry="4" fill="#CDAE62"/>
<ellipse cx="78" cy="4" rx="23" ry="6" fill="#4A8838"/><ellipse cx="88" cy="3" rx="8" ry="4" fill="#79B05A"/>
<ellipse cx="79" cy="41" rx="24" ry="15" fill="#2E6C2B"/><ellipse cx="64" cy="38" rx="7" ry="7" fill="#7DB466"/><ellipse cx="90" cy="36" rx="8" ry="7" fill="#3F8236"/><ellipse cx="70" cy="50" rx="10" ry="6" fill="#2A6428"/>
<ellipse cx="66" cy="15.500" rx="4.600" ry="4" fill="#1D1115"/><ellipse cx="85.500" cy="18.500" rx="7" ry="6.500" fill="#29161F"/>
</g></g></svg>
<div class="cr" style="left:591px;top:26px;width:182px;height:400px"></div>
<div style="font-size:24px;letter-spacing:0.14px;left:610px;top:85px;color:#6B6052">Sodium nitrate</div>
<div class="bl" style="left:613px;top:157.0px;font-size:13px">•</div><div class="bl" style="font-size:15px;letter-spacing:-1.01px;left:628.400px;top:156.5px">Due to Long reser</div>
<div class="bl" style="left:613px;top:181.8px;font-size:13px">•</div><div class="bl" style="font-size:15px;letter-spacing:-0.97px;left:628.400px;top:181.3px">Acts as a preservative</div>
<div class="bl" style="font-size:15px;letter-spacing:-0.71px;left:628.400px;top:200.9px">in preservation meat</div>
<div class="bl" style="font-size:15px;letter-spacing:-0.50px;left:628.400px;top:220.5px">like hotdog, sausage</div>
<div class="bl" style="font-size:15px;letter-spacing:-0.52px;left:628.400px;top:240.9px">,etc</div>
<div class="bl" style="left:613px;top:269.0px;font-size:13px">•</div><div class="bl" style="font-size:15px;letter-spacing:-0.17px;left:628.400px;top:268.5px">Destroys growth of</div>
<div class="bl" style="font-size:15px;letter-spacing:-1.72px;left:628.400px;top:288.5px">microorganisms</div>
<div class="bl" style="font-size:15px;letter-spacing:-0.61px;left:628.400px;top:308.1px">botulism</div>
<div class="bl" style="left:613px;top:333.6px;font-size:13px">•</div><div class="bl" style="font-size:15px;letter-spacing:-0.72px;left:628.400px;top:333.1px">Bring red color of</div>
<div class="bl" style="font-size:15px;letter-spacing:-0.66px;left:628.400px;top:352.5px">meat</div>
</div></div>
<!-- thumb 6 -->
<div class="th" style="top:708.500px"><div class="th4">
<div style="left:21px;top:22px;width:550px;height:368px;background:radial-gradient(ellipse 12% 10% at 8% 2%,#8FB048 0 60%,transparent 100%),radial-gradient(ellipse 16% 8% at 62% 2%,#D2552A 0 60%,transparent 100%),radial-gradient(ellipse 10% 8% at 90% 3%,#C84A32 0 60%,transparent 100%),radial-gradient(ellipse 14% 8% at 36% 2%,#E8A368 0 60%,transparent 100%),linear-gradient(90deg,#9DB356 0,#E2B27A 25%,#D66A3C 60%,#C9503A 100%)"></div>
<div class="cr" style="left:591px;top:28px;width:182px;height:400px"></div>
</div></div>
</div>
<!-- main slide -->
<svg width="0" height="0" style="left:0;top:0">
<defs>
<g id="lf"><path d="M0,0A99.7,99.7 0 0 1 97.4,-95A99.7,99.7 0 0 1 0,0Z" fill="none" stroke="#FEF2DA" stroke-width="3.3" stroke-linejoin="miter"/><path d="M0,0L82,-80" stroke="#FEF2DA" stroke-width="2.4" fill="none"/><path d="M9.3,-10.1C9.6,-15.5 6.8,-16.1 7.5,-22.3C7.9,-26.6 9.6,-28.2 11.8,-28C14,-27.8 15.4,-25.8 14.9,-21.5C14.3,-15.4 11.4,-15.3 10.7,-9.9ZM9.9,-10.7C15.3,-11.4 15.4,-14.3 21.5,-14.9C25.8,-15.4 27.8,-14 28,-11.8C28.2,-9.6 26.6,-7.9 22.3,-7.5C16.1,-6.8 15.5,-9.6 10.1,-9.3ZM18.9,-19.6C19.2,-28.5 16.4,-29.2 17,-39.2C17.5,-46.3 19.2,-49.1 21.4,-49C23.6,-48.9 25,-45.8 24.5,-38.8C23.9,-28.8 21,-28.4 20.3,-19.6ZM19.6,-20.3C28.4,-21 28.8,-23.9 38.8,-24.5C45.8,-25 48.9,-23.6 49,-21.4C49.1,-19.2 46.3,-17.5 39.2,-17C29.2,-16.4 28.5,-19.2 19.6,-18.9ZM29.9,-30.6C30.2,-40 27.4,-40.8 28,-51.4C28.5,-58.9 30.2,-61.9 32.4,-61.8C34.6,-61.7 36,-58.5 35.5,-51C34.9,-40.4 32,-39.9 31.3,-30.6ZM30.6,-31.3C39.9,-32 40.4,-34.9 51,-35.5C58.5,-36 61.7,-34.6 61.8,-32.4C61.9,-30.2 58.9,-28.5 51.4,-28C40.8,-27.4 40,-30.2 30.6,-29.9ZM40.3,-41C40.6,-50.1 37.8,-50.8 38.4,-61C38.9,-68.2 40.6,-71.1 42.8,-71C45,-70.9 46.4,-67.8 45.9,-60.6C45.3,-50.4 42.4,-49.9 41.7,-41ZM41,-41.7C49.9,-42.4 50.4,-45.3 60.6,-45.9C67.8,-46.4 70.9,-45 71,-42.8C71.1,-40.6 68.2,-38.9 61,-38.4C50.8,-37.8 50.1,-40.6 41,-40.3ZM51.7,-52.4C52,-60.5 49.2,-61.2 49.8,-70.3C50.3,-76.8 52,-79.4 54.2,-79.2C56.4,-79 57.8,-76.3 57.3,-69.8C56.7,-60.7 53.8,-60.4 53.1,-52.4ZM52.4,-53.1C60.4,-53.8 60.7,-56.7 69.8,-57.3C76.3,-57.8 79,-56.4 79.2,-54.2C79.4,-52 76.8,-50.3 70.3,-49.8C61.2,-49.2 60.5,-52 52.4,-51.7ZM63,-63.8C63.3,-70.2 60.5,-70.9 61.2,-78.2C61.6,-83.4 63.3,-85.4 65.5,-85.2C67.7,-85 69.1,-82.7 68.6,-77.6C68,-70.3 65.1,-70.1 64.4,-63.6ZM63.6,-64.4C70.1,-65.1 70.3,-68 77.6,-68.6C82.7,-69.1 85,-67.7 85.2,-65.5C85.4,-63.3 83.4,-61.6 78.2,-61.2C70.9,-60.5 70.2,-63.3 63.8,-63ZM74.7,-75.5C75,-79.8 72.9,-80.3 73.5,-85.2C73.9,-88.6 75.4,-89.8 77.2,-89.6C79,-89.4 80.1,-87.8 79.7,-84.4C79.1,-79.6 76.8,-79.5 76.1,-75.3ZM75.3,-76.1C79.5,-76.8 79.6,-79.1 84.4,-79.7C87.8,-80.1 89.4,-79 89.6,-77.2C89.8,-75.4 88.6,-73.9 85.2,-73.5C80.3,-72.9 79.8,-75 75.5,-74.7ZM80,-78C83,-85.5 88.5,-89.5 94.3,-92C91.5,-86.5 87.5,-81 80,-78Z" fill="#FEF2DA"/></g><g id="oc"><circle r="34.3" fill="none" stroke="#FEF2DA" stroke-width="3.7"/><g fill="#FEF2DA" stroke="none"><circle r="13.6"/><path d="M-17.5,-16L17.5,16M17.5,-16L-17.5,16" stroke="#FEF2DA" stroke-width="8.5" fill="none"/><rect x="-22.6" y="-20.9" width="9.5" height="9.5"/><rect x="-22.6" y="11.4" width="9.5" height="9.5"/><rect x="13.1" y="-20.9" width="9.5" height="9.5"/><rect x="13.1" y="11.4" width="9.5" height="9.5"/><g transform="rotate(0) translate(0,0)"><circle cx="-6.8" cy="-16.2" r="3.3" fill="#FEF2DA"/><path d="M-11.1,-17.8A4.6,4.6 0 0 0 -2.9,-13.8" fill="none" stroke="#E8C177" stroke-width="2"/><circle cx="6.8" cy="-16.2" r="3.3" fill="#FEF2DA"/><path d="M11.1,-17.8A4.6,4.6 0 0 1 2.9,-13.8" fill="none" stroke="#E8C177" stroke-width="2"/></g><g transform="rotate(180) translate(0,0)"><circle cx="-6.8" cy="-16.2" r="3.3" fill="#FEF2DA"/><path d="M-11.1,-17.8A4.6,4.6 0 0 0 -2.9,-13.8" fill="none" stroke="#E8C177" stroke-width="2"/><circle cx="6.8" cy="-16.2" r="3.3" fill="#FEF2DA"/><path d="M11.1,-17.8A4.6,4.6 0 0 1 2.9,-13.8" fill="none" stroke="#E8C177" stroke-width="2"/></g><g transform="rotate(-90) translate(0,-2.4)"><circle cx="-6.4" cy="-16.2" r="3.3" fill="#FEF2DA"/><path d="M-10.7,-17.8A4.6,4.6 0 0 0 -2.5,-13.8" fill="none" stroke="#E8C177" stroke-width="2"/><circle cx="6.4" cy="-16.2" r="3.3" fill="#FEF2DA"/><path d="M10.7,-17.8A4.6,4.6 0 0 1 2.5,-13.8" fill="none" stroke="#E8C177" stroke-width="2"/></g><g transform="rotate(90) translate(0,-2.4)"><circle cx="-6.4" cy="-16.2" r="3.3" fill="#FEF2DA"/><path d="M-10.7,-17.8A4.6,4.6 0 0 0 -2.5,-13.8" fill="none" stroke="#E8C177" stroke-width="2"/><circle cx="6.4" cy="-16.2" r="3.3" fill="#FEF2DA"/><path d="M10.7,-17.8A4.6,4.6 0 0 1 2.5,-13.8" fill="none" stroke="#E8C177" stroke-width="2"/></g><path d="M0,-29.5C2.5,-25 4.6,-22 4.4,-19C4.2,-16 2.6,-13.5 2.4,-10h-4.8C-2.600,-13.500 -4.200,-16 -4.400,-19C-4.600,-22 -2.500,-25 0,-29.500ZM0,30.500C2.500,26 4.600,23 4.400,20C4.200,17 2.600,14.500 2.400,11h-4.800C-2.600,14.500 -4.200,17 -4.400,20C-4.600,23 -2.500,26 0,30.500Z"/><path d="M-29.500,0L-22.500,-1.300V-3h3.500v6h-3.500v-1.700ZM29.800,0L22.800,-1.300V-3h-3.500v6h3.500v-1.700Z"/><rect x="-20" y="-2.600" width="8" height="5.200"/><rect x="12" y="-2.600" width="8" height="5.200"/></g><ellipse rx="5.600" ry="4.400" fill="#E8C177"/></g>
<filter id="ts" x="-5%" y="-20%" width="110%" height="150%"><feGaussianBlur in="SourceAlpha" stdDeviation="1.6"/><feOffset dx="1" dy="2.5"/><feComponentTransfer><feFuncA type="linear" slope="0.30"/></feComponentTransfer><feMerge><feMergeNode/><feMergeNode in="SourceGraphic"/></feMerge></filter>
<filter id="tsh" x="-5%" y="-20%" width="110%" height="150%"><feGaussianBlur in="SourceAlpha" stdDeviation="1.6"/><feOffset dx="1" dy="2.2"/><feComponentTransfer><feFuncA type="linear" slope="0.22"/></feComponentTransfer></filter>
<filter id="cs" x="-3%" y="-5%" width="106%" height="112%"><feGaussianBlur in="SourceAlpha" stdDeviation="3"/><feOffset dx="0" dy="1"/><feComponentTransfer><feFuncA type="linear" slope="0.32"/></feComponentTransfer><feMerge><feMergeNode/><feMergeNode in="SourceGraphic"/></feMerge></filter>
<clipPath id="sc"><rect width="1174.2" height="660.4"/></clipPath>
<symbol id="slidebg" viewBox="0 0 1174.2 660.4" preserveAspectRatio="none">
<g clip-path="url(#sc)">
<rect width="1174.2" height="660.4" fill="#E8C177"/>
<use href="#lf" transform="translate(88,-67.1) scale(1,-1)"/><use href="#lf" transform="translate(88,-67.1) scale(-1,-1)"/><use href="#lf" transform="translate(287.4,-67.1) scale(1,-1)"/><use href="#lf" transform="translate(287.4,-67.1) scale(-1,-1)"/><use href="#lf" transform="translate(486.8,-67.1) scale(1,-1)"/><use href="#lf" transform="translate(486.8,-67.1) scale(-1,-1)"/><use href="#lf" transform="translate(686.2,-67.1) scale(1,-1)"/><use href="#lf" transform="translate(686.2,-67.1) scale(-1,-1)"/><use href="#lf" transform="translate(885.6,-67.1) scale(1,-1)"/><use href="#lf" transform="translate(885.6,-67.1) scale(-1,-1)"/><use href="#lf" transform="translate(1085,-67.1) scale(1,-1)"/><use href="#lf" transform="translate(1085,-67.1) scale(-1,-1)"/><use href="#oc" x="88" y="32.6"/><use href="#oc" x="287.4" y="32.6"/><use href="#oc" x="486.8" y="32.6"/><use href="#oc" x="686.2" y="32.6"/><use href="#oc" x="885.6" y="32.6"/><use href="#oc" x="1085" y="32.6"/><use href="#oc" x="-11.7" y="132.3"/><use href="#lf" x="88" y="132.3"/><use href="#lf" transform="translate(88,132.3) scale(-1,1)"/><use href="#lf" transform="translate(88,132.3) scale(1,-1)"/><use href="#lf" transform="translate(88,132.3) scale(-1,-1)"/><use href="#oc" x="187.7" y="132.3"/><use href="#lf" x="287.4" y="132.3"/><use href="#lf" transform="translate(287.4,132.3) scale(-1,1)"/><use href="#lf" transform="translate(287.4,132.3) scale(1,-1)"/><use href="#lf" transform="translate(287.4,132.3) scale(-1,-1)"/><use href="#oc" x="387.1" y="132.3"/><use href="#lf" x="486.8" y="132.3"/><use href="#lf" transform="translate(486.8,132.3) scale(-1,1)"/><use href="#lf" transform="translate(486.8,132.3) scale(1,-1)"/><use href="#lf" transform="translate(486.8,132.3) scale(-1,-1)"/><use href="#oc" x="586.5" y="132.3"/><use href="#lf" x="686.2" y="132.3"/><use href="#lf" transform="translate(686.2,132.3) scale(-1,1)"/><use href="#lf" transform="translate(686.2,132.3) scale(1,-1)"/><use href="#lf" transform="translate(686.2,132.3) scale(-1,-1)"/><use href="#oc" x="785.9" y="132.3"/><use href="#lf" x="885.6" y="132.3"/><use href="#lf" transform="translate(885.6,132.3) scale(-1,1)"/><use href="#lf" transform="translate(885.6,132.3) scale(1,-1)"/><use href="#lf" transform="translate(885.6,132.3) scale(-1,-1)"/><use href="#oc" x="985.3" y="132.3"/><use href="#lf" x="1085" y="132.3"/><use href="#lf" transform="translate(1085,132.3) scale(-1,1)"/><use href="#lf" transform="translate(1085,132.3) scale(1,-1)"/><use href="#lf" transform="translate(1085,132.3) scale(-1,-1)"/><use href="#oc" x="1184.7" y="132.3"/><use href="#oc" x="88" y="232"/><use href="#oc" x="287.4" y="232"/><use href="#oc" x="486.8" y="232"/><use href="#oc" x="686.2" y="232"/><use href="#oc" x="885.6" y="232"/><use href="#oc" x="1085" y="232"/><use href="#oc" x="-11.7" y="331.7"/><use href="#lf" x="88" y="331.7"/><use href="#lf" transform="translate(88,331.7) scale(-1,1)"/><use href="#lf" transform="translate(88,331.7) scale(1,-1)"/><use href="#lf" transform="translate(88,331.7) scale(-1,-1)"/><use href="#oc" x="187.7" y="331.7"/><use href="#lf" x="287.4" y="331.7"/><use href="#lf" transform="translate(287.4,331.7) scale(-1,1)"/><use href="#lf" transform="translate(287.4,331.7) scale(1,-1)"/><use href="#lf" transform="translate(287.4,331.7) scale(-1,-1)"/><use href="#oc" x="387.1" y="331.7"/><use href="#lf" x="486.8" y="331.7"/><use href="#lf" transform="translate(486.8,331.7) scale(-1,1)"/><use href="#lf" transform="translate(486.8,331.7) scale(1,-1)"/><use href="#lf" transform="translate(486.8,331.7) scale(-1,-1)"/><use href="#oc" x="586.5" y="331.7"/><use href="#lf" x="686.2" y="331.7"/><use href="#lf" transform="translate(686.2,331.7) scale(-1,1)"/><use href="#lf" transform="translate(686.2,331.7) scale(1,-1)"/><use href="#lf" transform="translate(686.2,331.7) scale(-1,-1)"/><use href="#oc" x="785.9" y="331.7"/><use href="#lf" x="885.6" y="331.7"/><use href="#lf" transform="translate(885.6,331.7) scale(-1,1)"/><use href="#lf" transform="translate(885.6,331.7) scale(1,-1)"/><use href="#lf" transform="translate(885.6,331.7) scale(-1,-1)"/><use href="#oc" x="985.3" y="331.7"/><use href="#lf" x="1085" y="331.7"/><use href="#lf" transform="translate(1085,331.7) scale(-1,1)"/><use href="#lf" transform="translate(1085,331.7) scale(1,-1)"/><use href="#lf" transform="translate(1085,331.7) scale(-1,-1)"/><use href="#oc" x="1184.7" y="331.7"/><use href="#oc" x="88" y="431.4"/><use href="#oc" x="287.4" y="431.4"/><use href="#oc" x="486.8" y="431.4"/><use href="#oc" x="686.2" y="431.4"/><use href="#oc" x="885.6" y="431.4"/><use href="#oc" x="1085" y="431.4"/><use href="#oc" x="-11.7" y="531.1"/><use href="#lf" x="88" y="531.1"/><use href="#lf" transform="translate(88,531.1) scale(-1,1)"/><use href="#lf" transform="translate(88,531.1) scale(1,-1)"/><use href="#lf" transform="translate(88,531.1) scale(-1,-1)"/><use href="#oc" x="187.7" y="531.1"/><use href="#lf" x="287.4" y="531.1"/><use href="#lf" transform="translate(287.4,531.1) scale(-1,1)"/><use href="#lf" transform="translate(287.4,531.1) scale(1,-1)"/><use href="#lf" transform="translate(287.4,531.1) scale(-1,-1)"/><use href="#oc" x="387.1" y="531.1"/><use href="#lf" x="486.8" y="531.1"/><use href="#lf" transform="translate(486.8,531.1) scale(-1,1)"/><use href="#lf" transform="translate(486.8,531.1) scale(1,-1)"/><use href="#lf" transform="translate(486.8,531.1) scale(-1,-1)"/><use href="#oc" x="586.5" y="531.1"/><use href="#lf" x="686.2" y="531.1"/><use href="#lf" transform="translate(686.2,531.1) scale(-1,1)"/><use href="#lf" transform="translate(686.2,531.1) scale(1,-1)"/><use href="#lf" transform="translate(686.2,531.1) scale(-1,-1)"/><use href="#oc" x="785.9" y="531.1"/><use href="#lf" x="885.6" y="531.1"/><use href="#lf" transform="translate(885.6,531.1) scale(-1,1)"/><use href="#lf" transform="translate(885.6,531.1) scale(1,-1)"/><use href="#lf" transform="translate(885.6,531.1) scale(-1,-1)"/><use href="#oc" x="985.3" y="531.1"/><use href="#lf" x="1085" y="531.1"/><use href="#lf" transform="translate(1085,531.1) scale(-1,1)"/><use href="#lf" transform="translate(1085,531.1) scale(1,-1)"/><use href="#lf" transform="translate(1085,531.1) scale(-1,-1)"/><use href="#oc" x="1184.7" y="531.1"/><use href="#oc" x="88" y="630.8"/><use href="#oc" x="287.4" y="630.8"/><use href="#oc" x="486.8" y="630.8"/><use href="#oc" x="686.2" y="630.8"/><use href="#oc" x="885.6" y="630.8"/><use href="#oc" x="1085" y="630.8"/><use href="#lf" x="88" y="730.5"/><use href="#lf" transform="translate(88,730.5) scale(-1,1)"/><use href="#lf" x="287.4" y="730.5"/><use href="#lf" transform="translate(287.4,730.5) scale(-1,1)"/><use href="#lf" x="486.8" y="730.5"/><use href="#lf" transform="translate(486.8,730.5) scale(-1,1)"/><use href="#lf" x="686.2" y="730.5"/><use href="#lf" transform="translate(686.2,730.5) scale(-1,1)"/><use href="#lf" x="885.6" y="730.5"/><use href="#lf" transform="translate(885.6,730.5) scale(-1,1)"/><use href="#lf" x="1085" y="730.5"/><use href="#lf" transform="translate(1085,730.5) scale(-1,1)"/>
</g>
</symbol>
<symbol id="slide1" viewBox="0 0 1174.2 660.4" preserveAspectRatio="none">
<g clip-path="url(#sc)">
<rect x="126.8" y="123" width="921.3" height="415.5" fill="#fff" filter="url(#cs)"/>
<rect x="140.3" y="137.7" width="895.1" height="387.6" fill="none" stroke="#3A3A3A" stroke-width="1.1"/>
<rect x="495.1" y="123" width="184.9" height="70.2" fill="#F0A22E"/>
<path d="M506.1,123V185.5H669.8V123" fill="none" stroke="#3A3A3A" stroke-width="1.1"/>
<g font-family="'Liberation Sans',sans-serif" font-size="76.5" fill="#ECA132" text-anchor="middle" filter="url(#tsh)">
<text x="578.3" y="305.3" textLength="760.7" lengthAdjust="spacingAndGlyphs">Preservatives contain</text>
<text x="578.3" y="392.9" textLength="264.5" lengthAdjust="spacingAndGlyphs">sodium</text>
</g>
<g font-family="'Liberation Sans',sans-serif" font-size="76.5" fill="#ECA132" text-anchor="middle">
<text x="578.3" y="305.3" textLength="760.7" lengthAdjust="spacingAndGlyphs">Preservatives contain</text>
<text x="578.3" y="392.9" textLength="264.5" lengthAdjust="spacingAndGlyphs">sodium</text>
</g>
<text x="586.9" y="473.5" font-family="'Liberation Serif',serif" font-size="18.3" fill="#3A3532" text-anchor="middle" textLength="99" lengthAdjust="spacing">Razie kashi</text>
</g>
</symbol>
</defs>
</svg>
<svg style="left:524.2px;top:310px" width="1174.2" height="660.4"><use href="#slidebg" width="1174.2" height="660.4"/><use href="#slide1" width="1174.2" height="660.4"/></svg>
<!-- status bar -->
<div class="abs" style="left:1497px;top:991px;width:51px;height:39px;background:#C9C9C9"></div>
<div class="t" style="font-size:12.8px;letter-spacing:0.10px;left:14.200px;top:1003px;line-height:15px;color:#444">Slide 1 of 12</div>
<div class="t" style="font-size:12.8px;letter-spacing:-0.18px;left:171.300px;top:1003px;line-height:15px;color:#444">Persian (Iran)</div>
<div class="t" style="font-size:12.8px;letter-spacing:0.25px;left:1314px;top:1003px;line-height:15px;color:#444">Notes</div>
<div class="t" style="font-size:12.8px;letter-spacing:-0.09px;left:1408.500px;top:1003px;line-height:15px;color:#444">Comments</div>
<div class="t" style="font-size:12.8px;letter-spacing:-0.42px;left:1876.400px;top:1003px;line-height:15px;color:#444">74 %</div>
<svg style="left:0;top:990px" width="1920" height="40" viewBox="0 990 1920 40" fill="none" stroke="#6A6A6A" stroke-width="1.100">
<!-- notes edit icon -->
<path d="M128.500,1001.500c-2.500,-1 -5.500,-1 -8.800,0v14.500c3.300,-1 6.300,-1 8.800,0l1,1.500v-14.500zM130.500,1003.500v12.500c2.500,-1 5,-1 7.500,-0.300v-5"/><path d="M139.500,1001.300l1.700,1.700l-7.200,7.200l-2.400,.7l.7,-2.400z" fill="#6A6A6A" stroke-width=".6"/>
<!-- notes -->
<path d="M1289.500,1008h17M1289.500,1012.200h17M1289.500,1016.400h10.500" stroke-width="1.300"/><path d="M1294,1004.500h8l-4,-4.200z" fill="#6A6A6A" stroke="none"/>
<!-- comments -->
<path d="M1383.500,999.500h19a1.500,1.500 0 0 1 1.500,1.500v11a1.500,1.500 0 0 1 -1.500,1.500h-10l-4.500,4.500v-4.500h-4.500a1.500,1.500 0 0 1 -1.500,-1.500v-11a1.500,1.500 0 0 1 1.500,-1.500z" fill="#5A5A5A" stroke="none"/>
<!-- normal view -->
<path d="M1513.800,1001.800h18v16h-18zM1518.300,1001.800v16M1518.300,1013.800h13.500"/><rect x="1521.800" y="1005" width="6.500" height="5.300"/>
<!-- sorter -->
<path d="M1564.800,1001.800h7.500v6.500h-7.500zM1575.300,1001.800h7.500v6.500h-7.500zM1564.800,1011.300h7.500v6.500h-7.500zM1575.300,1011.300h7.500v6.500h-7.500z"/>
<!-- reading view -->
<path d="M1624.500,1003.300c-3,-1.500 -6,-1.500 -9,-0.500v13.500c3,-1 6,-1 9,.5c3,-1.500 6,-1.500 9,-0.500v-13.500c-3,-1 -6,-1 -9,.5zM1624.500,1003.300v15"/><path d="M1617.500,1006.300h5M1617.500,1009.300h5M1617.500,1012.300h5M1626.500,1006.300h5M1626.500,1009.300h5M1626.500,1012.300h5" stroke-width=".9"/><path d="M1622.500,1017.500l2,2.300l2,-2.300" fill="#6A6A6A" stroke="none"/>
<!-- slideshow -->
<path d="M1666,1001.300h19.500M1668.500,1001.300v10.500h14.500v-10.500M1675.800,1011.800v6.200M1671.500,1018.500h8.600"/>
<!-- zoom slider -->
<path d="M1706.200,1009.800h9.300" stroke-width="1.700" stroke="#5A5A5A"/><path d="M1720,1009.800h124.500" stroke="#A0A0A0" stroke-width="1"/><path d="M1782.500,1006.500v6.600" stroke="#A0A0A0" stroke-width="1"/>
<rect x="1762.600" y="1002.900" width="6.200" height="13.700" fill="#6E6E6E" stroke="none"/>
<path d="M1849,1009.800h9.800M1853.900,1004.900v9.800" stroke-width="1.700" stroke="#5A5A5A"/>
</svg>
<!-- taskbar -->
<div class="abs" style="left:60px;top:1030px;width:430px;height:50px;background:#F3F3F3;border-top:1px solid #C9C9C9"></div>
<div class="abs" style="left:864.500px;top:1030px;width:60.500px;height:50px;background:#23476A"></div>
<div class="abs" style="left:559.500px;top:1077.500px;width:50.500px;height:2.500px;background:#8FBBE6"></div>
<div class="abs" style="left:621.500px;top:1077.500px;width:50.500px;height:2.500px;background:#8FBBE6"></div>
<div class="abs" style="left:745px;top:1077.500px;width:51px;height:2.500px;background:#8FBBE6"></div>
<div class="abs" style="left:807.500px;top:1077.500px;width:50.500px;height:2.500px;background:#8FBBE6"></div>
<div class="abs" style="left:869.500px;top:1077.500px;width:55.500px;height:2.500px;background:#9CC5EC"></div>
<div class="t" style="font-size:17px;letter-spacing:0.08px;left:110.800px;top:1045.500px;line-height:20px;color:#3A3A3A">Type here to search</div>
<svg style="left:0;top:1030px" width="1920" height="50" viewBox="0 1030 1920 50">
<!-- windows logo -->
<path d="M20,1047.800l8.500,-1.200v8h-8.500zM29.800,1046.400l10.200,-1.500v9.700h-10.200zM20,1055.800h8.500v8l-8.500,-1.200zM29.800,1055.800h10.200v9.700l-10.200,-1.500z" fill="#fff"/>
<!-- cortana -->
<circle cx="85" cy="1055" r="11" fill="none" stroke="#111" stroke-width="3.600"/><circle cx="85" cy="1055" r="13.200" fill="none" stroke="#777" stroke-width=".8" opacity=".6"/>
<!-- mic -->
<g fill="none" stroke="#333" stroke-width="1.500"><rect x="460.500" y="1045.500" width="7" height="12.500" rx="3.500"/><path d="M457.800,1053.500v1.500a6.200,6.200 0 0 0 12.400,0v-1.500M464,1061.200v3.300M460.500,1064.800h7"/></g>
<!-- task view -->
<g fill="none" stroke="#fff" stroke-width="1.400"><path d="M512,1048.500h13.500v11h-13.500zM510,1044.800v2M527.500,1044.800v2M510,1061.500v2M527.500,1061.500v2M510,1045.500h17.500M510,1062.800h17.500"/><path d="M530,1045v3M530,1051v8M530,1062v2" stroke-width="1.300"/></g>
<!-- edge -->
<path d="M572,1055.500c.5,-8.500 6.500,-14 13.500,-14c7.500,0 11.500,5.500 11,13.500h-16.500c.3,4 3.500,6.500 8,6.500c3,0 5.500,-.8 7.500,-2v5.500c-2.500,1.500 -5.500,2.300 -9,2.300c-8,0 -13,-5 -13,-12.300c0,-4 2,-7.500 5,-9.300c-3.500,2 -5.500,5.300 -6.500,9.800zM580.200,1051h9.500c-.2,-3 -2,-5 -4.800,-5c-2.600,0 -4.300,2 -4.700,5z" fill="#2F8BE2"/>
<!-- explorer -->
<path d="M633,1044.500h9l2,2.500h15.500v18h-26.500z" fill="#F2CE62"/><path d="M633,1049h26.500v16h-26.500z" fill="#F9E08A"/><path d="M638,1055.500h16.500v9.500h-16.500z" fill="#4C9FD8"/><path d="M641,1058.500h10.500v6.500h-10.500z" fill="#F9E08A"/><path d="M634.500,1045.800h6" stroke="#D9A93A" stroke-width="1.200"/>
<!-- store -->
<path d="M693.500,1049h28.500v19.500h-28.500z" fill="#fff"/><path d="M702.500,1049v-2.500a5.300,5.300 0 0 1 10.600,0v2.500" fill="none" stroke="#D8D8D8" stroke-width="1.500"/>
<rect x="702" y="1052.800" width="5.200" height="5.200" fill="#F25022"/><rect x="708.300" y="1052.800" width="5.200" height="5.200" fill="#7FBA00"/><rect x="702" y="1059.100" width="5.200" height="5.200" fill="#00A4EF"/><rect x="708.300" y="1059.100" width="5.200" height="5.200" fill="#FFB900"/>
<!-- chrome -->
<circle cx="770" cy="1055" r="13.800" fill="#DB4437"/><path d="M770,1055l-12,-6.900a13.800,13.800 0 0 0 5.100,18.900z" fill="#0F9D58"/><path d="M770,1055l-6.900,12a13.800,13.800 0 0 0 18.900,-5.100a13.800,13.800 0 0 0 1.800,-6.900z" fill="#0F9D58"/><path d="M770,1055h13.800a13.800,13.800 0 0 1 -20.700,12z" fill="#FFCD40"/><path d="M758,1048.100a13.800,13.800 0 0 1 23.900,0z" fill="#DB4437"/>
<circle cx="770" cy="1055" r="6.300" fill="#fff"/><circle cx="770" cy="1055" r="5" fill="#4285F4"/>
<!-- word -->
<rect x="825.500" y="1041.500" width="20.500" height="26" rx="1.500" fill="#2B7CD3"/><rect x="825.500" y="1041.500" width="20.500" height="6.500" fill="#41A5EE"/><rect x="825.500" y="1054.500" width="20.500" height="6.500" fill="#185ABD"/><rect x="825.500" y="1061" width="20.500" height="6.500" fill="#103F91"/><rect x="817.500" y="1047" width="15" height="15" rx="1.200" fill="#185ABD"/>
<!-- powerpoint -->
<circle cx="896" cy="1054.500" r="12.800" fill="#ED6C47"/><path d="M896,1041.700a12.800,12.800 0 0 1 12.800,12.800h-12.800z" fill="#FF8F6B"/><path d="M883.200,1054.500h25.600a12.800,12.800 0 0 1 -25.600,0z" fill="#D35230"/><rect x="879" y="1047" width="15" height="15" rx="1.200" fill="#C43E1C"/>
<!-- tray -->
<g fill="none" stroke="#fff" stroke-width="1.300"><circle cx="1582.500" cy="1049.500" r="3.200"/><circle cx="1574.500" cy="1053.500" r="2.700"/><path d="M1576.800,1063.500c0,-5 2.200,-8 5.700,-8c2.200,0 4,1 5,3.200M1569.500,1063.800c0,-4 1.800,-6.500 5,-6.500c3.200,0 5,2.500 5,6.500"/>
<path d="M1615.500,1059.300l7.700,-7.700l7.700,7.700" stroke-width="1.500"/>
<path d="M1677,1062.500a14.500,14.500 0 0 1 14,-14M1680.800,1062.500a10.700,10.700 0 0 1 10.200,-10.200M1684.800,1062.500a6.700,6.700 0 0 1 6.200,-6.200" stroke-width="1.200"/>
<path d="M1703,1052.500h3.500l4.500,-4v13l-4.500,-4h-3.500z"/><path d="M1714.500,1051.500l6.500,6.500M1721,1051.500l-6.500,6.500" stroke-width="1.200"/>
<path d="M1870,1046h18.500v14h-9.500l-4.500,4v-4h-4.500z" fill="#fff"/></g>
<circle cx="1690.300" cy="1061.800" r="1.500" fill="#fff"/>
<path d="M1646,1060.500a4.300,4.300 0 0 1 .8,-8.500a6,6 0 0 1 11.200,-1a4.800,4.800 0 0 1 2,9.500z" fill="#C9D3DC"/><circle cx="1659.500" cy="1061" r="5.200" fill="#8A8A8A"/><path d="M1658,1058.500v5M1661,1058.500v5" stroke="#fff" stroke-width="1.100"/>
<path d="M1873,1050h12.500M1873,1053h12.500M1873,1056h9" stroke="#1C3B51" stroke-width="1"/>
<circle cx="1889" cy="1065" r="9.500" fill="#18578C" stroke="#5C9BD1" stroke-width="1"/>
<path d="M1914.500,1030v50" stroke="#7F95A8" stroke-width="1"/>
</svg>
<div class="t" style="left:821.500px;top:1049.500px;font-size:10.500px;font-weight:bold;color:#fff;line-height:11px">W</div>
<div class="t" style="left:883.300px;top:1049.500px;font-size:10.500px;font-weight:bold;color:#fff;line-height:11px">P</div>
<div class="t" style="left:1886.200px;top:1059px;font-size:12px;color:#fff;line-height:13px">1</div>
<div class="t" style="font-size:13.5px;letter-spacing:-0.75px;left:1742.500px;top:1059px;line-height:15px;color:#fff">FA</div>
<div class="t" style="left:1743.500px;top:1035.500px;font-size:13px;line-height:18px;color:#fff;font-family:'DejaVu Sans',sans-serif;direction:rtl">فا</div>
<div class="t" style="left:1780px;top:1034px;width:68px;text-align:right;font-size:14.500px;line-height:20px;color:#fff;font-family:'Liberation Sans','DejaVu Sans',sans-serif;direction:rtl"><span style="font-family:'DejaVu Sans',sans-serif;font-size:13.500px">ب.ظ</span> <span style="letter-spacing:-.3px">12:34</span></div>
<div class="t" style="left:1776px;top:1056.500px;width:72.500px;text-align:right;font-size:14.500px;line-height:20px;color:#fff;font-family:'DejaVu Sans',sans-serif;letter-spacing:-.6px;direction:ltr">۱۳۹۸/۰۶/۲۵</div>
</div>
</body>
</html>
